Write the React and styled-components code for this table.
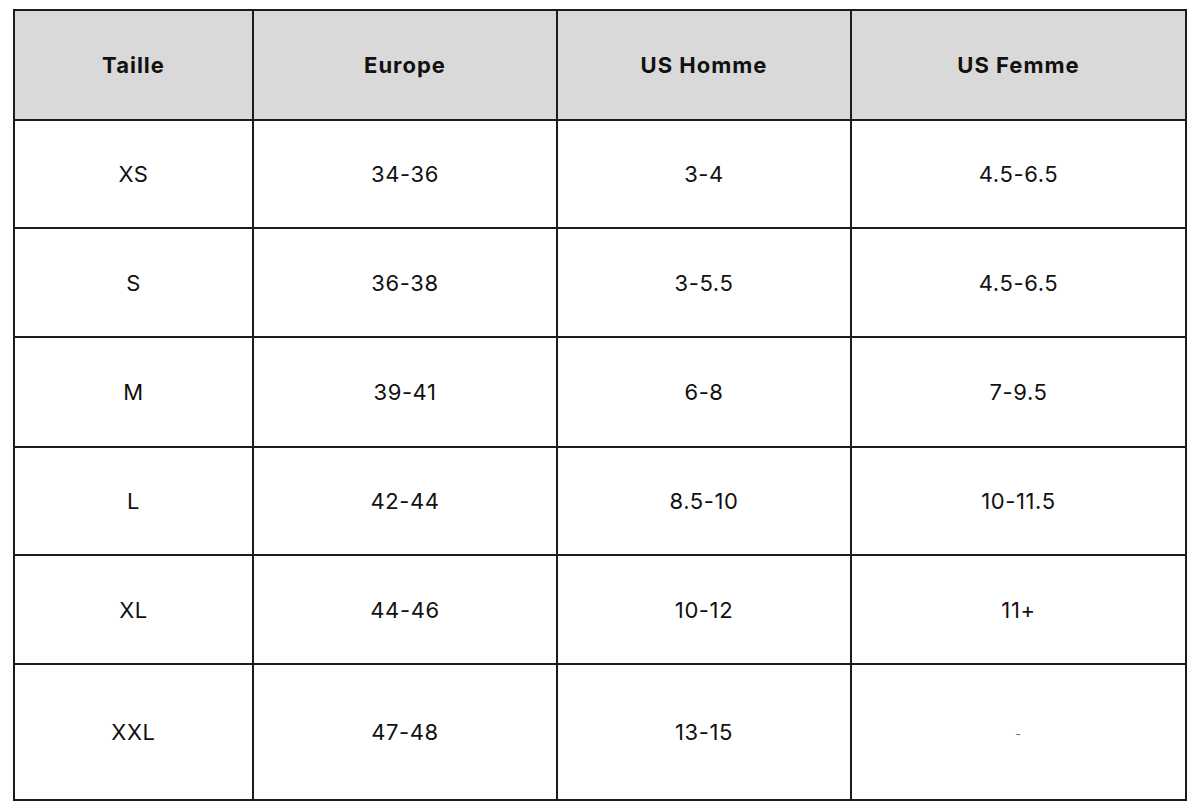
import React from "react";
import styled, { createGlobalStyle } from "styled-components";

const GlobalStyle = createGlobalStyle`
  html, body { margin: 0; padding: 0; background: #ffffff; }
  body { font-family: Inter, "Liberation Sans", sans-serif; }
`;

const Page = styled.div`
  padding: 9px 0 0 13px;
`;

const Table = styled.table`
  table-layout: fixed;
  border-collapse: separate;
  border-spacing: 2px;
  background: #1c1c1c;
  width: 1174px;
  font-family: Inter, "Liberation Sans", sans-serif;
  color: #111111;
`;

const HeadCell = styled.th`
  background: #d9d9d9;
  height: 108px;
  padding: 0;
  font-size: 22px;
  font-weight: 700;
  letter-spacing: 1px;
  text-align: center;
  vertical-align: middle;
`;

const Cell = styled.td`
  background: #ffffff;
  height: ${(p) => p.$h}px;
  padding: 0;
  font-size: 22px;
  font-weight: 400;
  letter-spacing: 0.6px;
  text-align: center;
  vertical-align: middle;
`;

const Dash = styled.span`
  display: inline-block;
  vertical-align: middle;
  font-size: 12px;
  line-height: 12px;
  color: #666666;
`;

const cols = [237, 302, 292, 333];
const headers = ["Taille", "Europe", "US Homme", "US Femme"];
const rows = [
  { h: 106, v: ["XS", "34-36", "3-4", "4.5-6.5"] },
  { h: 107, v: ["S", "36-38", "3-5.5", "4.5-6.5"] },
  { h: 108, v: ["M", "39-41", "6-8", "7-9.5"] },
  { h: 106, v: ["L", "42-44", "8.5-10", "10-11.5"] },
  { h: 107, v: ["XL", "44-46", "10-12", "11+"] },
  { h: 134, v: ["XXL", "47-48", "13-15", null] },
];

export default function App() {
  return (
    <>
      <GlobalStyle />
      <Page>
        <Table>
          <colgroup>
            {cols.map((w, i) => (
              <col key={i} style={{ width: w }} />
            ))}
          </colgroup>
          <thead>
            <tr>
              {headers.map((h) => (
                <HeadCell key={h}>{h}</HeadCell>
              ))}
            </tr>
          </thead>
          <tbody>
            {rows.map((r, i) => (
              <tr key={i}>
                {r.v.map((c, j) => (
                  <Cell key={j} $h={r.h}>
                    {c === null ? <Dash>-</Dash> : c}
                  </Cell>
                ))}
              </tr>
            ))}
          </tbody>
        </Table>
      </Page>
    </>
  );
}
